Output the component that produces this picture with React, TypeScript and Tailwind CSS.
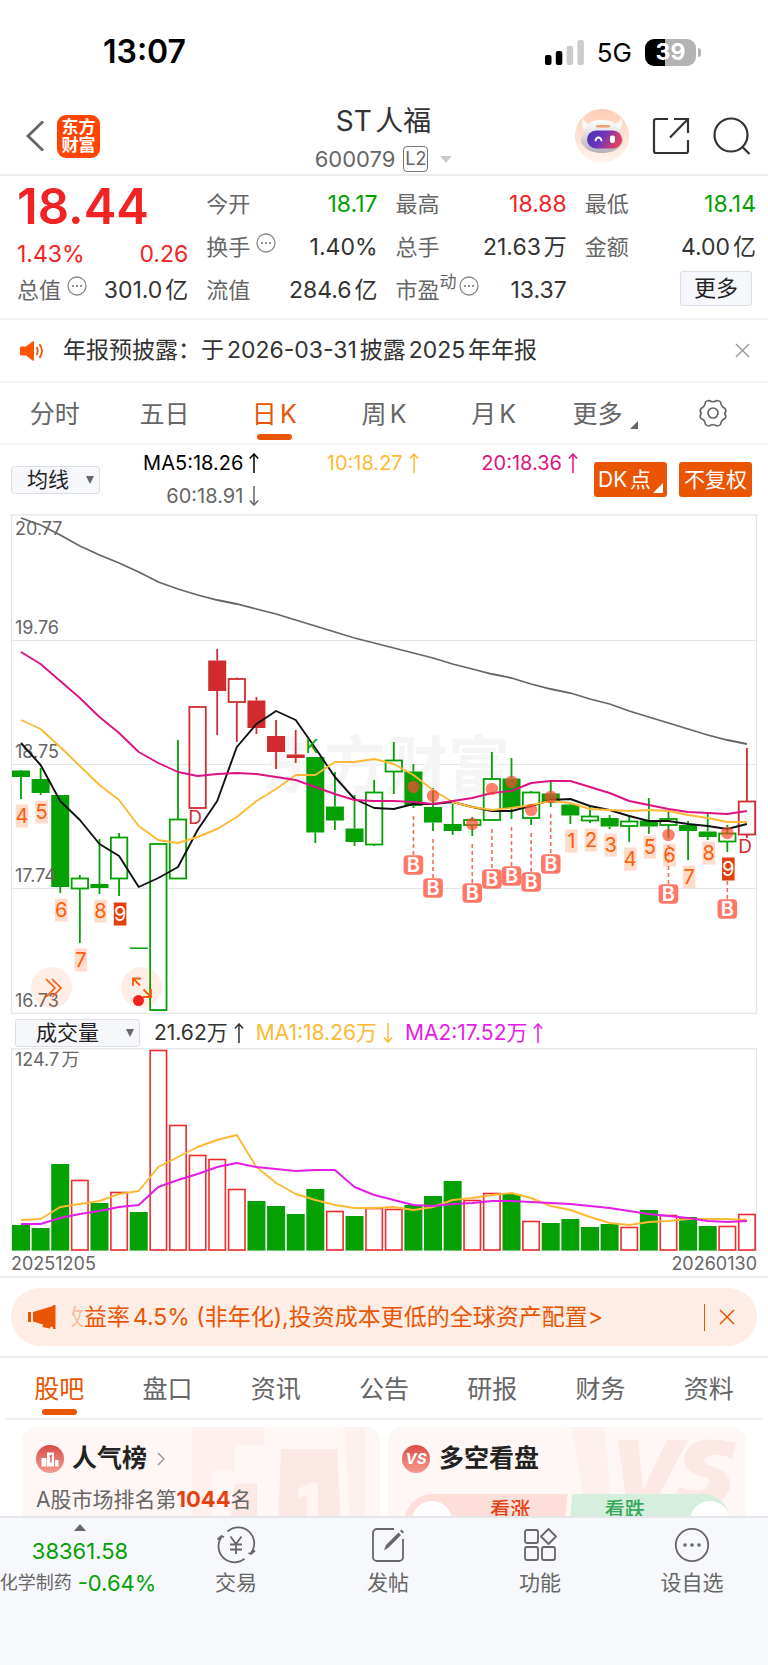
import type { ReactNode } from 'react';

type Kind = 'fill' | 'hollow' | 'redFill' | 'redHollow';
type Candle = [top: number, bottom: number, high: number, low: number, kind: Kind];

const FIRST_X = 21;
const STEP = 19.62;
const cx = (i: number) => FIRST_X + STEP * i;
const line = (ys: number[]) => ys.map((y, i) => `${cx(i).toFixed(1)},${y}`).join(' ');

const GREEN = '#04a004';
const RED = '#d02c2f';

const candles: Candle[] = [
  [770.5, 777, 770, 799, 'fill'],
  [779, 793, 768, 795, 'fill'],
  [795, 887, 795, 893, 'fill'],
  [878, 889, 875, 943, 'hollow'],
  [884, 888, 839, 894, 'fill'],
  [837, 879, 833, 896, 'hollow'],
  [947.5, 949, 948, 948, 'fill'],
  [843.5, 1010.5, 844, 1010, 'hollow'],
  [819, 879, 740, 879, 'hollow'],
  [706.5, 808.5, 707, 808, 'redHollow'],
  [660.5, 691, 649, 735, 'redFill'],
  [678.5, 702.5, 677.5, 742, 'redHollow'],
  [700.5, 728, 697, 734, 'redFill'],
  [736, 752, 720, 769, 'redFill'],
  [754.5, 758, 730, 763, 'redFill'],
  [757, 832.5, 757, 843, 'fill'],
  [806.5, 820.5, 772, 830, 'fill'],
  [828.5, 842, 795, 846, 'fill'],
  [792, 845, 780, 846, 'hollow'],
  [760, 772, 742, 794, 'hollow'],
  [771.5, 806, 764, 808, 'fill'],
  [807, 822.5, 788, 831, 'fill'],
  [824, 831, 804, 835, 'fill'],
  [819.5, 825.5, 817, 836, 'hollow'],
  [778.5, 820.5, 752, 821, 'hollow'],
  [778.5, 808, 758, 819, 'fill'],
  [792, 818.5, 791, 825, 'hollow'],
  [793.5, 802.5, 782, 807, 'fill'],
  [804.5, 815.5, 802, 824, 'fill'],
  [816, 821, 806, 823, 'hollow'],
  [818, 826.5, 815, 829, 'fill'],
  [821, 826.5, 815, 842, 'hollow'],
  [820.5, 826.5, 798, 834, 'fill'],
  [818.5, 825.5, 810, 838, 'hollow'],
  [825, 831, 821, 860, 'fill'],
  [831.5, 837, 813, 840, 'fill'],
  [833, 842, 825, 852, 'hollow'],
  [801, 835, 748, 838, 'redHollow'],
];

const ma5 = [743, 765, 801, 820, 844, 856, 887, 878, 867, 830, 801, 747, 724, 711, 720, 748, 777, 799, 808, 809, 804, 804, 802, 807, 811, 811, 806, 800, 799, 806, 810, 816, 821, 821, 824, 826, 829, 824];
const ma10 = [720, 729, 747, 766, 785, 800, 826, 840, 843, 837, 829, 817, 801, 789, 775, 775, 762, 762, 759, 764, 775, 790, 802, 807, 810, 808, 805, 801, 803, 809, 810, 811, 810, 811, 815, 818, 822, 822];
const ma20 = [652, 664, 681, 698, 717, 733, 752, 763, 772, 776, 774, 773, 774, 777, 780, 787, 794, 800, 801, 801, 802, 804, 801, 798, 793, 791, 783, 781, 781, 787, 793, 801, 805, 809, 812, 813, 814, 811];
const ma60 = [518, 525, 535, 546, 555, 563, 572, 582, 589, 595, 600, 604, 609, 614, 620, 626, 632, 638, 643, 648, 653, 658, 664, 669, 674, 678, 684, 689, 693, 699, 704, 711, 717, 723, 729, 735, 740, 744];

const signals: [index: number, dot: number, lineTop: number, box: number][] = [
  [20, 787, 816, 865],
  [21, 796, 839, 888],
  [23, 824, 844, 893],
  [24, 789, 829, 879],
  [25, 782, 827, 876],
  [26, 810, 833, 882],
  [27, 797, 814, 864],
  [33, 835, 845, 894],
  [36, 833, 881, 909],
];

const counts: [index: number, n: string, y: number][] = [
  [0, '4', 816], [1, '5', 812], [2, '6', 910], [3, '7', 960], [4, '8', 911], [5, '9', 914],
  [28, '1', 841], [29, '2', 840], [30, '3', 845], [31, '4', 859], [32, '5', 847],
  [33, '6', 855], [34, '7', 877], [35, '8', 853], [36, '9', 869],
];

const volumes: [top: number, up: boolean][] = [
  [1225, false], [1228, false], [1164, false], [1180, true], [1203, false], [1192, true], [1212, false], [1050, true],
  [1125, true], [1155, true], [1159, true], [1189, true], [1201, false], [1206, false], [1214, false], [1189, false],
  [1211, true], [1216, false], [1208, true], [1209, true], [1205, false], [1196, false], [1181, false], [1200, true],
  [1193, true], [1194, false], [1221, true], [1223, false], [1219, false], [1227, false], [1224, false], [1227, true],
  [1210, false], [1215, true], [1217, false], [1226, false], [1226, true], [1214, true],
];
const volMa1 = [1220, 1219, 1207, 1204, 1201, 1194, 1191, 1167, 1157, 1147, 1140, 1135, 1167, 1183, 1194, 1200, 1205, 1208, 1208, 1207, 1210, 1207, 1200, 1198, 1195, 1193, 1198, 1206, 1210, 1217, 1223, 1225, 1222, 1221, 1219, 1219, 1219, 1220];
const volMa2 = [1224, 1224, 1218, 1214, 1211, 1207, 1205, 1187, 1180, 1174, 1167, 1163, 1167, 1169, 1171, 1170, 1170, 1187, 1195, 1200, 1205, 1206, 1204, 1203, 1201, 1201, 1202, 1203, 1204, 1206, 1208, 1211, 1214, 1216, 1218, 1221, 1222, 1221];

function CandleShape({ c, i }: { c: Candle; i: number }) {
  const [top, bottom, high, low, kind] = c;
  const color = kind.startsWith('red') ? RED : GREEN;
  const hollow = kind === 'hollow' || kind === 'redHollow';
  const x = cx(i);
  return (
    <g stroke={color} strokeWidth={1.8}>
      {high < top && <line x1={x} x2={x} y1={high} y2={top} />}
      {low > bottom && <line x1={x} x2={x} y1={bottom} y2={low} />}
      {hollow ? (
        <rect x={x - 8.2} y={top + 0.5} width={16.4} height={bottom - top - 1} fill="#fff" />
      ) : (
        <rect x={x - 9} y={top} width={18} height={bottom - top} fill={color} stroke="none" />
      )}
    </g>
  );
}

function PriceChart() {
  return (
    <svg viewBox="11 514 746 500" className="block w-full" role="img" aria-label="日K">
      <g stroke="#e3e5ea" strokeWidth={1.2} fill="none">
        <path d="M11 640.5H757M11 764.5H757M11 888.5H757" />
        <rect x={11.6} y={515} width={744.8} height={498.4} />
      </g>
      <text x={386} y={788} textAnchor="middle" fontSize={62} fontWeight={700} fill="#f5f5f6">东方财富</text>
      <polyline points={line(ma60)} fill="none" stroke="#666" strokeWidth={1.8} />
      {candles.map((c, i) => <CandleShape key={i} c={c} i={i} />)}
      <g fontSize={18} fill="#666">
        <text x={15} y={535}>20.77</text>
        <text x={15} y={634}>19.76</text>
        <text x={15} y={758}>18.75</text>
        <text x={15} y={882}>17.74</text>
        <text x={15} y={1007}>16.73</text>
      </g>
      <g fill="none" strokeWidth={1.9} strokeLinejoin="round">
        <polyline points={line(ma5)} stroke="#111" />
        <polyline points={line(ma10)} stroke="#fdb933" />
        <polyline points={line(ma20)} stroke="#dd1284" />
      </g>
      {counts.map(([i, n, y]) => (
        <g key={i}>
          <rect x={cx(i) - 5.3} y={y - 11.5} width={12.6} height={23} fill={n === '9' ? '#e5400f' : '#ffdccb'} />
          <text x={cx(i) + 1} y={y + 7.2} textAnchor="middle" fontSize={20} fill={n === '9' ? '#fff' : '#fb5c08'}>{n}</text>
        </g>
      ))}
      {signals.map(([i, dot, top, box]) => (
        <g key={i}>
          <circle cx={cx(i)} cy={dot} r={6.2} fill="#fb4a30" fillOpacity={0.7} />
          <line x1={cx(i)} x2={cx(i)} y1={top} y2={box - 9} stroke="#fa6b57" strokeWidth={1.6} strokeDasharray="4 3" />
          <rect x={cx(i) - 9.8} y={box - 9.8} width={19.6} height={19.6} rx={4} fill="#ff7867" />
          <text x={cx(i)} y={box + 7} textAnchor="middle" fontSize={20} fontWeight={600} fill="#fff">B</text>
        </g>
      ))}
      <g fontSize={19} textAnchor="middle">
        <text x={195} y={824} fill={RED}>D</text>
        <text x={745} y={853} fill={RED}>D</text>
        <text x={312} y={753} fill={GREEN}>K</text>
      </g>
    </svg>
  );
}

function VolumeChart() {
  return (
    <svg viewBox="11 1048 746 203" className="block w-full" role="img" aria-label="成交量">
      <rect x={11.6} y={1048.8} width={744.8} height={201.6} fill="none" stroke="#e3e5ea" strokeWidth={1.2} />
      {volumes.map(([top, up], i) =>
        up ? (
          <rect key={i} x={cx(i) - 8.2} y={top + 0.5} width={16.4} height={1249.5 - top} fill="#fff" stroke="#f12a2c" strokeWidth={1.6} />
        ) : (
          <rect key={i} x={cx(i) - 9} y={top} width={18} height={1250.5 - top} fill={GREEN} />
        ),
      )}
      <g fill="none" strokeWidth={1.9} strokeLinejoin="round">
        <polyline points={line(volMa1)} stroke="#fdb933" />
        <polyline points={line(volMa2)} stroke="#e51ce8" />
      </g>
      <text x={15} y={1066} fontSize={18} fill="#666">124.7万</text>
    </svg>
  );
}

function Arrow({ down = false }: { down?: boolean }) {
  return (
    <svg viewBox="0 0 10 20" className="h-5 w-2.5 shrink-0" fill="none" stroke="currentColor" strokeWidth={1.5} aria-hidden="true">
      {down ? <path d="M5 0v19M.8 14.6 5 19l4.2-4.4" /> : <path d="M5 20V1M.8 5.4 5 1l4.2 4.4" />}
    </svg>
  );
}

function Info() {
  return (
    <svg viewBox="0 0 20 20" className="mb-2 ml-1.5 size-5 shrink-0" aria-hidden="true">
      <circle cx={10} cy={10} r={9} fill="none" stroke="#888" strokeWidth={1.3} />
      <g fill="#777"><circle cx={6} cy={10} r={1.1} /><circle cx={10} cy={10} r={1.1} /><circle cx={14} cy={10} r={1.1} /></g>
    </svg>
  );
}

function Cell({ label, value, tone = 'text-[#333]', info, sup }: { label: string; value: string; tone?: string; info?: boolean; sup?: string }) {
  return (
    <div className="flex h-[43px] items-center justify-between whitespace-nowrap">
      <dt className="flex items-center text-[22px] text-[#666]">
        {label}
        {sup && <span className="-mr-1 mb-4 text-[17px] leading-5">{sup}</span>}
        {info && <Info />}
      </dt>
      <dd className={tone}>{value}</dd>
    </div>
  );
}

function CloseIcon({ className }: { className: string }) {
  return (
    <svg viewBox="0 0 16 16" className={className} fill="none" stroke="currentColor" strokeWidth={1.5} aria-hidden="true">
      <path d="M1 1l14 14M15 1 1 15" />
    </svg>
  );
}

function Picker({ label, option, className }: { label: string; option: string; className: string }) {
  return (
    <div className="relative shrink-0">
      <select aria-label={label} className={`block h-7 appearance-none rounded-[3px] border border-[#dcdfe5] bg-[#f6f7fa] text-[21px] leading-6 text-[#222] ${className}`}>
        <option>{option}</option>
      </select>
      <svg viewBox="0 0 8 8" className="pointer-events-none absolute top-2.5 right-1.5 size-2" aria-hidden="true"><path d="M0 0h8L4 8z" fill="#666" /></svg>
    </div>
  );
}

function Robot() {
  return (
    <svg viewBox="0 0 54 54" className="size-[54px]" aria-hidden="true">
      <defs>
        <linearGradient id="halo" x1="0" y1="0" x2="0" y2="1"><stop offset="0" stopColor="#ffcdb6" /><stop offset="1" stopColor="#fff4ee" /></linearGradient>
        <linearGradient id="visor" x1="0" y1="0" x2="1" y2="0.3"><stop offset="0" stopColor="#4a35a8" /><stop offset=".5" stopColor="#6a35c0" /><stop offset="1" stopColor="#e0405f" /></linearGradient>
        <linearGradient id="shell" x1="0" y1="0" x2="0" y2="1"><stop offset="0" stopColor="#fff" /><stop offset="1" stopColor="#b5afb8" /></linearGradient>
      </defs>
      <circle cx={27} cy={27} r={27} fill="url(#halo)" />
      <path d="M8.500 9C5 15 7 20 12 21l5-6Q9 15 8.500 9zM45.500 9c3.500 6 1.500 11-3.500 12l-5-6q8 0 8.500-6z" fill="#fbf8f8" />
      <path d="M27 11c-12 0-18 6-19 15-3 2-3 9 .5 10.500C12 42 19 44 27 44s15-2 18.500-7.500C49 35 49 28 46 26c-1-9-7-15-19-15z" fill="url(#shell)" />
      <rect x={12} y={21.5} width={35} height={18} rx={9} fill="url(#visor)" />
      <rect x={21} y={16} width={14} height={2.5} rx={1} fill="#eda16c" />
      <path d="M20.500 31.500c1-4 5-4 6 0" fill="none" stroke="#fff" strokeWidth={1.8} strokeLinecap="round" />
      <rect x={35} y={26.5} width={5} height={7.5} rx={2} fill="#fff" />
    </svg>
  );
}

function Tab({ children, active }: { children: ReactNode; active?: boolean }) {
  return (
    <button type="button" className={`relative flex h-full items-center justify-center pt-1 text-[25px] ${active ? 'text-[#ea5504]' : 'text-[#666]'}`}>
      {children}
      {active && <span className="absolute bottom-[3px] h-[6px] w-[35px] rounded-[3px] bg-[#ea5504]" />}
    </button>
  );
}

const navIcon = 'size-9 text-[#666]';
const actions: { label: string; icon: ReactNode }[] = [
  {
    label: '交易',
    icon: (
      <svg viewBox="0 0 36 36" className={`${navIcon} overflow-visible`} fill="none" stroke="currentColor" strokeWidth={1.8}>
        <path d="M9.500 4.500A16 16 0 0 1 33 26M37 23.500 33 27l-2.500-1M26.500 31.800A16 16 0 0 1 3.500 10M-.5 12.500 3.500 9 6 10M12.500 9.500 18 17l5.500-7.500M12 17.500h12M12 22.500h12M18 17v10" />
      </svg>
    ),
  },
  {
    label: '发帖',
    icon: (
      <svg viewBox="0 0 36 36" className={navIcon} fill="none" stroke="currentColor" strokeWidth={1.8}>
        <path d="M24 2H7a4 4 0 0 0-4 4v24a4 4 0 0 0 4 4h22a4 4 0 0 0 4-4V12" />
        <path d="M14 23.500 16 18 28.500 5.500l2.500 2.500L18.500 20.500zM30 4l1.500-1.500 2.500 2.500L32.500 6.500z" fill="currentColor" stroke="none" />
      </svg>
    ),
  },
  {
    label: '功能',
    icon: (
      <svg viewBox="0 0 36 36" className={navIcon} fill="none" stroke="currentColor" strokeWidth={1.8}>
        <rect x={3} y={3} width={13} height={13} rx={2} /><rect x={3} y={20} width={13} height={13} rx={2} /><rect x={20} y={20} width={13} height={13} rx={2} />
        <path d="M26.500 2 34 9.500 26.500 17 19 9.500z" strokeLinejoin="round" />
      </svg>
    ),
  },
  {
    label: '设自选',
    icon: (
      <svg viewBox="0 0 36 36" className={navIcon} fill="none" stroke="currentColor" strokeWidth={1.8}>
        <circle cx={18} cy={18} r={16.2} />
        <g fill="currentColor" stroke="none"><circle cx={11} cy={18} r={1.8} /><circle cx={18} cy={18} r={1.8} /><circle cx={25} cy={18} r={1.8} /></g>
      </svg>
    ),
  },
];

const sections = ['股吧', '盘口', '资讯', '公告', '研报', '财务', '资料'];

export default function App() {
  return (
    <div className="flex min-h-screen flex-col bg-white font-[Inter,'Noto_Sans_CJK_SC',sans-serif] text-[#333] [text-autospace:normal]">
      <div className="flex h-[92px] items-center justify-between pt-3 pr-[67px] pl-[103px]">
        <span className="text-[32px] font-semibold text-black">13:07</span>
        <div className="flex items-center gap-[13px]">
          <svg viewBox="0 0 39 25" className="h-[25px] w-[39px]" aria-hidden="true">
            <rect x={0} y={15} width={6.500} height={10} rx={2} /><rect x={10.800} y={11} width={6.500} height={14} rx={2} />
            <rect x={21.600} y={6} width={6.500} height={19} rx={2} fill="#ccc" /><rect x={32.400} y={0} width={6.500} height={25} rx={2} fill="#ccc" />
          </svg>
          <span className="text-[26px] text-black">5G</span>
          <div className="flex items-center gap-[2px]">
            <div className="flex h-[27px] w-[51px] items-center justify-center rounded-[9px] bg-linear-to-r from-black from-40% to-[#b3b3b3] to-40% text-[23px] font-bold text-white">39</div>
            <span className="h-[9px] w-[3px] rounded-r-full bg-[#b3b3b3]" />
          </div>
        </div>
      </div>

      <header className="grid h-[84px] grid-cols-[1fr_auto_1fr] items-center border-b-2 border-[#ececee] pt-[3px] pr-[17px] pl-[25px]">
        <div className="flex items-center gap-3">
          <button type="button" aria-label="返回">
            <svg viewBox="0 0 20 32" className="h-8 w-5" fill="none" stroke="#666" strokeWidth={2.800}><path d="M18 1.500 3 16l15 14.500" /></svg>
          </button>
          <a href="#home" className="flex size-[43px] flex-col items-center justify-center rounded-[9px] bg-[#ff4400] text-[17px] leading-[18px] font-bold text-white">
            <span>东方</span><span>财富</span>
          </a>
        </div>
        <div className="flex flex-col items-center pt-1.5 pr-[9px]">
          <h1 className="text-[28px] leading-10">ST人福</h1>
          <button type="button" className="flex items-center gap-2 text-[22px] leading-9 text-[#666]">
            600079
            <span className="flex h-[26px] w-[25px] items-center justify-center rounded-[4px] border border-[#777] text-[18px]">L2</span>
            <svg viewBox="0 0 12 7" className="ml-1 h-[7px] w-3"><path d="M0 0h12L6 7z" fill="#ccc" /></svg>
          </button>
        </div>
        <div className="flex items-center justify-end gap-[23px]">
          <button type="button" aria-label="助手"><Robot /></button>
          <button type="button" aria-label="分享">
            <svg viewBox="0 0 38 38" className="size-[38px]" fill="none" stroke="#333" strokeWidth={2.200}><path d="M16 2H4a2 2 0 0 0-2 2v30a2 2 0 0 0 2 2h30a2 2 0 0 0 2-2V23M22 2h14v14M36 2 18 20.500" /></svg>
          </button>
          <button type="button" aria-label="搜索">
            <svg viewBox="0 0 38 38" className="size-[38px]" fill="none" stroke="#333" strokeWidth={2.200}><circle cx={18} cy={18} r={16.500} /><path d="M29 29.500 36.500 37" /></svg>
          </button>
        </div>
      </header>

      <section className="grid h-36 grid-cols-4 gap-x-[18px] border-b-2 border-[#f4f4f6] pt-1.5 pr-3 pl-[17px] text-[23px] leading-7">
        <div className="text-[#f12323]">
          <div className="h-[50px] text-[49px] leading-[50px] font-semibold">18.44</div>
          <div className="flex h-9 items-end justify-between"><span>1.43%</span><span>0.26</span></div>
          <dl><Cell label="总值" value="301.0亿" info /></dl>
        </div>
        <dl>
          <Cell label="今开" value="18.17" tone="text-[#04a004]" />
          <Cell label="换手" value="1.40%" info />
          <Cell label="流值" value="284.6亿" />
        </dl>
        <dl>
          <Cell label="最高" value="18.88" tone="text-[#f12323]" />
          <Cell label="总手" value="21.63万" />
          <Cell label="市盈" sup="动" value="13.37" info />
        </dl>
        <div>
          <dl>
            <Cell label="最低" value="18.14" tone="text-[#04a004]" />
            <Cell label="金额" value="4.00亿" />
          </dl>
          <div className="flex h-10 items-center justify-end pr-1">
            <button type="button" className="flex h-[35px] w-[72px] items-center justify-center rounded-[3px] border border-[#dcdfe5] bg-[#f6f7fa] text-[22px] text-[#222]">更多</button>
          </div>
        </div>
      </section>

      <section className="flex h-[63px] items-center border-b-2 border-[#f4f4f6] pr-[18px] pl-5">
        <svg viewBox="0 0 24 20" className="h-5 w-6 shrink-0" aria-hidden="true">
          <path d="M1 5.500h5L12.500.500q1.500-.8 1.500 1v17q0 1.800-1.500 1L6 14.500H1Q0 14.500 0 13V7q0-1.500 1-1.500z" fill="#fd5304" />
          <path d="M16.500 6q2.500 4 0 8M19.500 3q5 7 0 14" fill="none" stroke="#fd5304" strokeWidth={1.800} />
        </svg>
        <p className="ml-[19px] flex-1 text-[23px]">年报预披露：于2026-03-31披露2025年年报</p>
        <button type="button" aria-label="关闭公告" className="text-[#999]"><CloseIcon className="size-[15px]" /></button>
      </section>

      <nav className="grid h-[62px] grid-cols-7 border-b-2 border-[#f6f6f8]">
        <Tab>分时</Tab>
        <Tab>五日</Tab>
        <Tab active>日K</Tab>
        <Tab>周K</Tab>
        <Tab>月K</Tab>
        <Tab>
          <span className="pl-1">更多</span>
          <svg viewBox="0 0 8 8" className="mt-5 ml-2 size-2"><path d="M8 0v8H0z" fill="#666" /></svg>
        </Tab>
        <button type="button" aria-label="设置" className="flex items-center justify-center">
          <svg viewBox="0 0 30 30" className="size-[30px]" fill="none" stroke="#666" strokeWidth={1.700} strokeLinejoin="round">
            <path d="M11 2.500q4 2.500 8 0 2 0 3.500 1.500.5 4.500 4.500 6.500 1.200 1.500.8 3-2.300 3.500 0 0-1.800 3 0 4 .3 1.500-.8 3-4 1.500-4.500 6-1.500 1.500-3.500 1.500-4-2.500-8 0-2 0-3.500-1.500-.5-4.500-4.500-6-1.200-1.500-.8-3 1.800-2.500 0-4-.4-1.500.8-3Q7 8.500 7.500 4 9 2.500 11 2.500z" />
            <circle cx={15} cy={15} r={5} />
          </svg>
        </button>
      </nav>

      <section className="flex h-[69px] items-center pr-4 pl-[11px] text-[20px]">
        <Picker label="指标" option="均线" className="w-[89px] pl-[15px]" />
        <div className="grid flex-1 grid-cols-3 gap-y-[9px] self-start pt-1.5 leading-6">
          <span className="flex items-center justify-end gap-1.5 text-black">MA5:18.26<Arrow /></span>
          <span className="flex items-center justify-end gap-1.5 text-[#fdb933]">10:18.27<Arrow /></span>
          <span className="flex items-center justify-end gap-1.5 text-[#dd1284]">20:18.36<Arrow /></span>
          <span className="flex items-center justify-end gap-1.5 text-[#666]">60:18.91<Arrow down /></span>
        </div>
        <div className="ml-4 flex gap-3 text-white">
          <button type="button" className="relative flex h-[35px] w-[73px] items-center justify-center rounded-[3px] bg-[#ea5504] pr-3 text-[21px]">
            DK点
            <svg viewBox="0 0 10 10" className="absolute right-1 bottom-1 size-2.5"><path d="M10 0v10H0z" fill="#fff" /></svg>
          </button>
          <button type="button" className="flex h-[35px] w-[73px] items-center justify-center rounded-[3px] bg-[#ea5504] text-[21px]">不复权</button>
        </div>
      </section>

      <section className="px-[11px]">
        <div className="relative">
          <PriceChart />
          <button type="button" aria-label="展开" className="absolute bottom-1.5 left-5 flex size-[41px] items-center justify-center rounded-full bg-[#fb5c08]/10">
            <svg viewBox="0 0 18 20" className="ml-1 h-5 w-[18px]" fill="none" stroke="#fb5c08" strokeWidth={1.700}><path d="M1 1l9 9-9 9M7 1l9 9-9 9" /></svg>
          </button>
          <button type="button" aria-label="全屏" className="absolute bottom-1.5 left-[110px] flex size-[41px] items-center justify-center rounded-full bg-[#fb5c08]/10">
            <svg viewBox="0 0 22 29" className="mt-2 h-[29px] w-[22px]">
              <path d="M2 9V1.500h8M2 1.500l7 7M20 12v8h-8M20 20l-7.500-7.500" fill="none" stroke="#fb5c08" strokeWidth={1.800} />
              <circle cx={7.500} cy={23.500} r={5.500} fill="#f5231e" />
            </svg>
          </button>
        </div>
        <div className="flex h-[34px] items-center gap-3 pt-1 pl-1 text-[21px] whitespace-nowrap [text-autospace:no-autospace]">
          <Picker label="副图指标" option="成交量" className="w-[125px] pl-[20px]" />
          <span className="flex items-center gap-1.5 pl-0.5">21.62万<Arrow /></span>
          <span className="flex items-center gap-1.5 text-[#fdb933]">MA1:18.26万<Arrow down /></span>
          <span className="flex items-center gap-1.5 text-[#e51ce8]">MA2:17.52万<Arrow /></span>
        </div>
        <VolumeChart />
        <div className="flex h-[25px] items-center justify-between text-[18px] text-[#666]"><span>20251205</span><span>20260130</span></div>
      </section>

      <section className="border-y-2 border-[#ececee] px-[11px] pt-[10px] pb-[10px]">
        <div className="flex h-[58px] items-center rounded-full bg-[#fdede5] pr-[22px] pl-[17px] text-[#ea5504]">
          <svg viewBox="0 0 28 24" className="h-6 w-7 shrink-0" aria-hidden="true"><path d="M0 7h3v10H0zM5 7 25 1V0h2.500v24H25v-2l-2-.5-1.500 2-7-1.500.500-2.500-10-3z" fill="#ea5504" /></svg>
          <div className="ml-4 flex flex-1 items-center overflow-hidden text-[23px] whitespace-nowrap">
            <span className="flex w-3 justify-end overflow-hidden opacity-30"><span>收</span></span>
            <a href="#offer">益率4.5% (非年化),投资成本更低的全球资产配置&gt;</a>
          </div>
          <span className="mr-[14px] h-[27px] w-px bg-[#ea5504]" />
          <button type="button" aria-label="关闭推广"><CloseIcon className="size-4" /></button>
        </div>
      </section>

      <nav className="mx-[5px] grid h-[62px] grid-cols-7 border-b-2 border-[#eeeff4]">
        {sections.map((s, i) => <Tab key={s} active={i === 0}>{s}</Tab>)}
      </nav>

      <section className="grid h-[96px] grid-cols-2 gap-x-2 overflow-hidden px-[22px] pt-[7px]">
        <article className="relative h-40 overflow-hidden rounded-[14px] bg-[#fef7f5] px-[14px] pt-[14px]">
          <svg viewBox="0 0 190 100" className="absolute top-0 right-0 h-[100px] w-[190px]" aria-hidden="true">
            <path d="M2 0h72v18H45v26H22v56H2zM155 0h20v100h-15zM45 56h22v44H38z" fill="#fdf0ed" />
            <path d="M91 22h56l4 78H88zM45 57h22v43H40z" fill="#fce8e5" />
            <path d="M108 62l12-6h8v44h-11V68l-9 3z" fill="#fef4f2" />
          </svg>
          <div className="relative flex h-9 items-center text-[25px] font-bold text-[#222]">
            <svg viewBox="0 0 28 28" className="mr-2 size-7" aria-hidden="true">
              <defs><linearGradient id="badge" x1="0" y1="0" x2="0" y2="1"><stop offset="0" stopColor="#d94b48" /><stop offset="1" stopColor="#f49c92" /></linearGradient></defs>
              <circle cx={14} cy={14} r={14} fill="url(#badge)" />
              <path d="M5.500 13h5v8.500h-5zM11 7.500h7v14h-7zM19 15h3.500v6.500H19z" fill="#fff" /><path d="M13.500 11.500 15 10.500v7" stroke="#d95450" strokeWidth={1.400} fill="none" />
            </svg>
            <h2>人气榜</h2>
            <svg viewBox="0 0 8 14" className="ml-2.5 h-[14px] w-2" fill="none" stroke="#999" strokeWidth={1.500}><path d="M1 1l6 6-6 6" /></svg>
          </div>
          <p className="relative mt-2 text-[21px] leading-7 text-[#666] [text-autospace:no-autospace]">A股市场排名第<b className="text-[22px] font-bold text-[#e5400f]">1044</b>名</p>
        </article>
        <article className="relative h-40 overflow-hidden rounded-[14px] bg-[#fef7f5] px-[14px] pt-[14px]">
          <svg viewBox="0 0 180 100" className="absolute top-0 right-0 h-[100px] w-[180px]" aria-hidden="true">
            <path d="M5 0h33l8 80H20z" fill="#fdf0ed" />
            <path d="M52 13h20l5 50 24-50h21L84 85H62zM170 16q-50-12-52 18 2 13 22 16 8 4-2 12-10 4-26-2l-5 18q48 12 57-18 2-16-22-22-8-6 4-10 10-1 20 4z" fill="#fce8e5" />
          </svg>
          <div className="relative flex h-9 items-center text-[25px] font-bold text-[#222]">
            <span className="mr-[9px] flex size-7 items-center justify-center rounded-full bg-linear-to-b from-[#d94b48] to-[#f49c92] text-[15px] text-white italic">VS</span>
            <h2>多空看盘</h2>
          </div>
          <div className="relative mt-[17px] mr-[2px] ml-[3px] flex h-[54px] text-[20px] leading-8 font-medium">
            <button type="button" className="w-1/2 rounded-l-full bg-[#fdded9] pl-12 text-[#e5400f] [clip-path:polygon(0_0,100%_0,97%_100%,0_100%)]"><span className="block h-full">看涨</span></button>
            <button type="button" className="w-1/2 rounded-r-full bg-[#d6eedd] pr-12 text-[#35a858] [clip-path:polygon(3%_0,100%_0,100%_100%,0_100%)]"><span className="block h-full">看跌</span></button>
            <span className="absolute top-[7px] left-[7px] size-10 rounded-full bg-white" />
            <span className="absolute top-[7px] right-0 size-10 rounded-full bg-white" />
          </div>
        </article>
      </section>

      <nav className="relative grid flex-1 grid-cols-[160px_repeat(4,1fr)] content-start border-t-2 border-[#e4e6ea] bg-[#f6f8fb]">
        <a href="#sector" className="flex flex-col items-center pt-1.5 text-[22px] text-[#04a004]">
          <svg viewBox="0 0 12 7" className="h-[7px] w-3" aria-hidden="true"><path d="M6 0l6 7H0z" fill="#666" /></svg>
          <span className="mt-1 leading-8">38361.58</span>
          <span className="flex items-center gap-1.5 pr-1 leading-8 whitespace-nowrap"><span className="text-[18px] text-[#666]">化学制药</span>-0.64%</span>
        </a>
        {actions.map((a) => (
          <button key={a.label} type="button" className="flex flex-col items-center pt-[9px] text-[21px] leading-8 text-[#666]">
            {a.icon}
            <span className="mt-1">{a.label}</span>
          </button>
        ))}
      </nav>
    </div>
  );
}
